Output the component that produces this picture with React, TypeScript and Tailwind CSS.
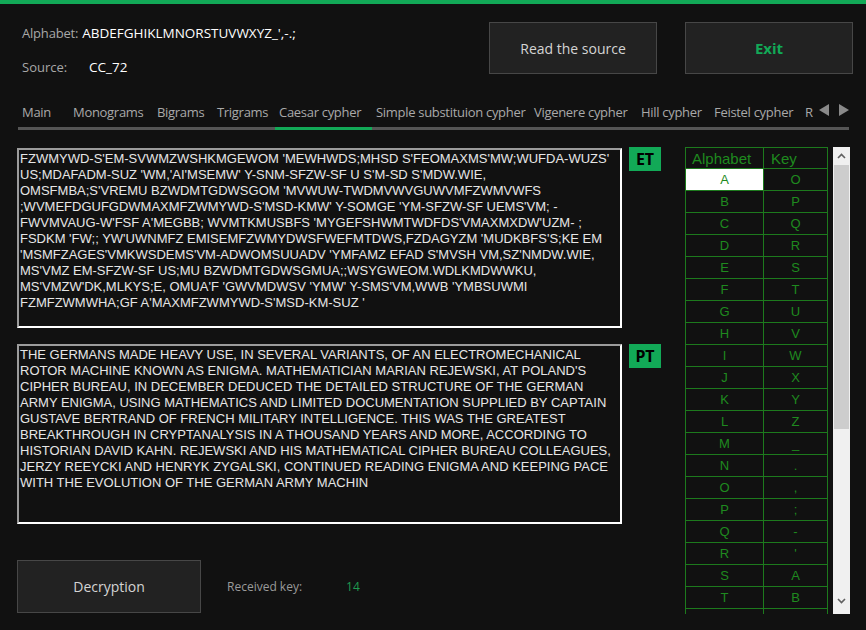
import { useState } from 'react'

const ET_LINES = [
  "FZWMYWD-S'EM-SVWMZWSHKMGEWOM 'MEWHWDS;MHSD S'FEOMAXMS'MW;WUFDA-WUZS'",
  "US;MDAFADM-SUZ 'WM,'AI'MSEMW' Y-SNM-SFZW-SF U S'M-SD S'MDW.WIE,",
  "OMSFMBA;S'VREMU BZWDMTGDWSGOM 'MVWUW-TWDMVWVGUWVMFZWMVWFS",
  ";WVMEFDGUFGDWMAXMFZWMYWD-S'MSD-KMW' Y-SOMGE 'YM-SFZW-SF UEMS'VM; -",
  "FWVMVAUG-W'FSF A'MEGBB; WVMTKMUSBFS 'MYGEFSHWMTWDFDS'VMAXMXDW'UZM- ;",
  "FSDKM 'FW;; YW'UWNMFZ EMISEMFZWMYDWSFWEFMTDWS,FZDAGYZM 'MUDKBFS'S;KE EM",
  "'MSMFZAGES'VMKWSDEMS'VM-ADWOMSUUADV 'YMFAMZ EFAD S'MVSH VM,SZ'NMDW.WIE,",
  "MS'VMZ EM-SFZW-SF US;MU BZWDMTGDWSGMUA;;WSYGWEOM.WDLKMDWWKU,",
  "MS'VMZW'DK,MLKYS;E, OMUA'F 'GWVMDWSV 'YMW' Y-SMS'VM,WWB 'YMBSUWMI",
  "FZMFZWMWHA;GF A'MAXMFZWMYWD-S'MSD-KM-SUZ '",
]

const PT_LINES = [
  'THE GERMANS MADE HEAVY USE, IN SEVERAL VARIANTS, OF AN ELECTROMECHANICAL',
  "ROTOR MACHINE KNOWN AS ENIGMA. MATHEMATICIAN MARIAN REJEWSKI, AT POLAND'S",
  'CIPHER BUREAU, IN DECEMBER DEDUCED THE DETAILED STRUCTURE OF THE GERMAN',
  'ARMY ENIGMA, USING MATHEMATICS AND LIMITED DOCUMENTATION SUPPLIED BY CAPTAIN',
  'GUSTAVE BERTRAND OF FRENCH MILITARY INTELLIGENCE. THIS WAS THE GREATEST',
  'BREAKTHROUGH IN CRYPTANALYSIS IN A THOUSAND YEARS AND MORE, ACCORDING TO',
  'HISTORIAN DAVID KAHN. REJEWSKI AND HIS MATHEMATICAL CIPHER BUREAU COLLEAGUES,',
  'JERZY REEYCKI AND HENRYK ZYGALSKI, CONTINUED READING ENIGMA AND KEEPING PACE',
  'WITH THE EVOLUTION OF THE GERMAN ARMY MACHIN',
]

const TABS = [
  { label: 'Main', w: 'w-[51px]' },
  { label: 'Monograms', w: 'w-[84px]' },
  { label: 'Bigrams', w: 'w-[60px]' },
  { label: 'Trigrams', w: 'w-[62px]' },
  { label: 'Caesar cypher', w: 'w-[97px]' },
  { label: 'Simple substituion cypher', w: 'w-[158px]' },
  { label: 'Vigenere cypher', w: 'w-[107px]' },
  { label: 'Hill cypher', w: 'w-[73px]' },
  { label: 'Feistel cypher', w: 'w-[91px]' },
  { label: 'R', w: 'w-[22px]' },
]

const KEY_ROWS: [string, string][] = [
  ['A', 'O'], ['B', 'P'], ['C', 'Q'], ['D', 'R'], ['E', 'S'], ['F', 'T'],
  ['G', 'U'], ['H', 'V'], ['I', 'W'], ['J', 'X'], ['K', 'Y'], ['L', 'Z'],
  ['M', '_'], ['N', '.'], ['O', ','], ['P', ';'], ['Q', '-'], ['R', "'"],
  ['S', 'A'], ['T', 'B'], ['', ''],
]

function TextBox({ lines }: { lines: string[] }) {
  return (
    <div className="w-[605px] h-[180px] border-2 border-t-[#9c9c9c] border-l-[#9c9c9c] border-b-white border-r-white bg-[#111111] pl-[1px] pt-[1px] font-['Liberation_Sans',Arial,sans-serif] text-[13px] leading-[16px] text-[#e6e6e6] overflow-hidden">
      {lines.map((l, i) => (
        <div key={i} className="whitespace-pre">{l}</div>
      ))}
    </div>
  )
}

function Badge({ text }: { text: string }) {
  return (
    <div className="w-[32px] h-[24px] bg-[#12a957] flex items-center justify-center font-['Noto_Sans',sans-serif] font-bold text-[16px] text-black">
      {text}
    </div>
  )
}

export default function App() {
  const [tab, setTab] = useState(4)

  return (
    <div className="w-[866px] h-[630px] bg-[#111111] overflow-hidden font-['Open_Sans',sans-serif]">
      <div className="h-[4px] bg-[#12a957]" />

      {/* header */}
      <div className="flex justify-between pl-[22px] pr-[13px] pt-[18px]">
        <div className="flex flex-col gap-[14px] pt-[1px]">
          <div className="h-[20px] leading-[20px] text-[13px] whitespace-nowrap">
            <span className="text-[#a8a8a8] tracking-[-0.2px]">Alphabet:</span>
            <span className="ml-[4px] text-white text-[13.5px]">ABDEFGHIKLMNORSTUVWXYZ_',-.;</span>
          </div>
          <div className="h-[20px] leading-[20px] text-[13px] flex">
            <span className="w-[67px] text-[#a8a8a8]">Source:</span>
            <span className="text-white text-[13.5px]">CC_72</span>
          </div>
        </div>
        <div className="flex gap-[28px]">
          <button className="w-[168px] h-[52px] bg-[#222222] border border-[#474747] text-[#d4d4d4] text-[14px]">
            Read the source
          </button>
          <button className="w-[168px] h-[52px] bg-[#222222] border border-[#474747] text-[#12a957] text-[15px] font-bold">
            Exit
          </button>
        </div>
      </div>

      {/* tabs */}
      <div className="mt-[24px] mx-[17px]">
        <div className="flex items-center h-[29px]">
          <div className="flex w-[806px] overflow-hidden pl-[1px] h-full">
            {TABS.map((t, i) => (
              <div
                key={t.label}
                onClick={() => setTab(i)}
                className={`${t.w} shrink-0 h-full flex flex-col justify-between cursor-pointer`}
              >
                <span className="pl-[4px] pt-[2px] text-[13px] tracking-[-0.3px] text-[#a9a9a9] whitespace-nowrap leading-[18px]">{t.label}</span>
                <div className={`h-[3px] ${i === tab ? 'bg-[#12a957]' : 'bg-[#555555]'}`} />
              </div>
            ))}
          </div>
          <div className="flex-1 h-full flex flex-col justify-between">
            <div className="flex items-center gap-[10px] pt-[3px] pl-[5px]">
              <svg width="10" height="12" viewBox="0 0 10 12">
                <path d="M10 0 L0 6 L10 12 Z" fill="#8a8a8a" />
              </svg>
              <svg width="10" height="12" viewBox="0 0 10 12">
                <path d="M0 0 L10 6 L0 12 Z" fill="#8a8a8a" />
              </svg>
            </div>
            <div className="h-[3px] bg-[#555555]" />
          </div>
        </div>
      </div>

      {/* content */}
      <div className="flex mt-[17px] pl-[17px]">
        <div className="w-[644px] flex flex-col">
          <div className="flex gap-[7px]">
            <div className="pt-[1px]">
              <TextBox lines={ET_LINES} />
            </div>
            <Badge text="ET" />
          </div>
          <div className="flex gap-[7px] mt-[16px]">
            <TextBox lines={PT_LINES} />
            <Badge text="PT" />
          </div>
          <div className="flex items-center mt-[36px]">
            <button className="w-[184px] h-[53px] bg-[#222222] border border-[#474747] text-[#d4d4d4] text-[14px]">
              Decryption
            </button>
            <span className="ml-[26px] text-[12px] text-[#9a9a9a]">Received key:</span>
            <span className="ml-[44px] text-[12px] text-[#1f9a4f]">14</span>
          </div>
        </div>

        {/* key table */}
        <div className="ml-[24px] flex gap-[5px]">
          <div className="w-[143px] h-[467px] overflow-hidden font-['Liberation_Sans',Arial,sans-serif]">
            <div className="grid grid-cols-[78px_64px] border-l border-t border-[#1d7a1d]">
              <div className="h-[21px] border-r border-b border-[#1d7a1d] pl-[6px] text-[15px] leading-[21px] text-[#1f8a1f]">Alphabet</div>
              <div className="h-[21px] border-r border-b border-[#1d7a1d] pl-[7px] text-[15px] leading-[21px] text-[#1f8a1f]">Key</div>
              {KEY_ROWS.map(([a, k], i) => (
                <div key={i} className="contents">
                  <div className={`h-[22px] border-r border-b border-[#1d7a1d] flex items-center justify-center text-[13px] text-[#1f8a1f] ${i === 0 ? 'bg-white' : ''}`}>
                    {a}
                  </div>
                  <div className="h-[22px] border-r border-b border-[#1d7a1d] flex items-center justify-center text-[13px] text-[#1f8a1f]">
                    {k}
                  </div>
                </div>
              ))}
            </div>
          </div>
          <div className="w-[17px] h-[467px] bg-[#f0f0f0] flex flex-col">
            <div className="h-[18px] flex items-center justify-center">
              <svg width="9" height="6" viewBox="0 0 9 6">
                <path d="M1 5 L4.5 1.5 L8 5" stroke="#606060" strokeWidth="1.6" fill="none" />
              </svg>
            </div>
            <div className="mx-[1px] h-[264px] bg-[#cdcdcd]" />
            <div className="flex-1" />
            <div className="h-[18px] flex items-center justify-center mb-[4px]">
              <svg width="9" height="6" viewBox="0 0 9 6">
                <path d="M1 1 L4.5 4.5 L8 1" stroke="#606060" strokeWidth="1.6" fill="none" />
              </svg>
            </div>
          </div>
        </div>
      </div>
    </div>
  )
}
